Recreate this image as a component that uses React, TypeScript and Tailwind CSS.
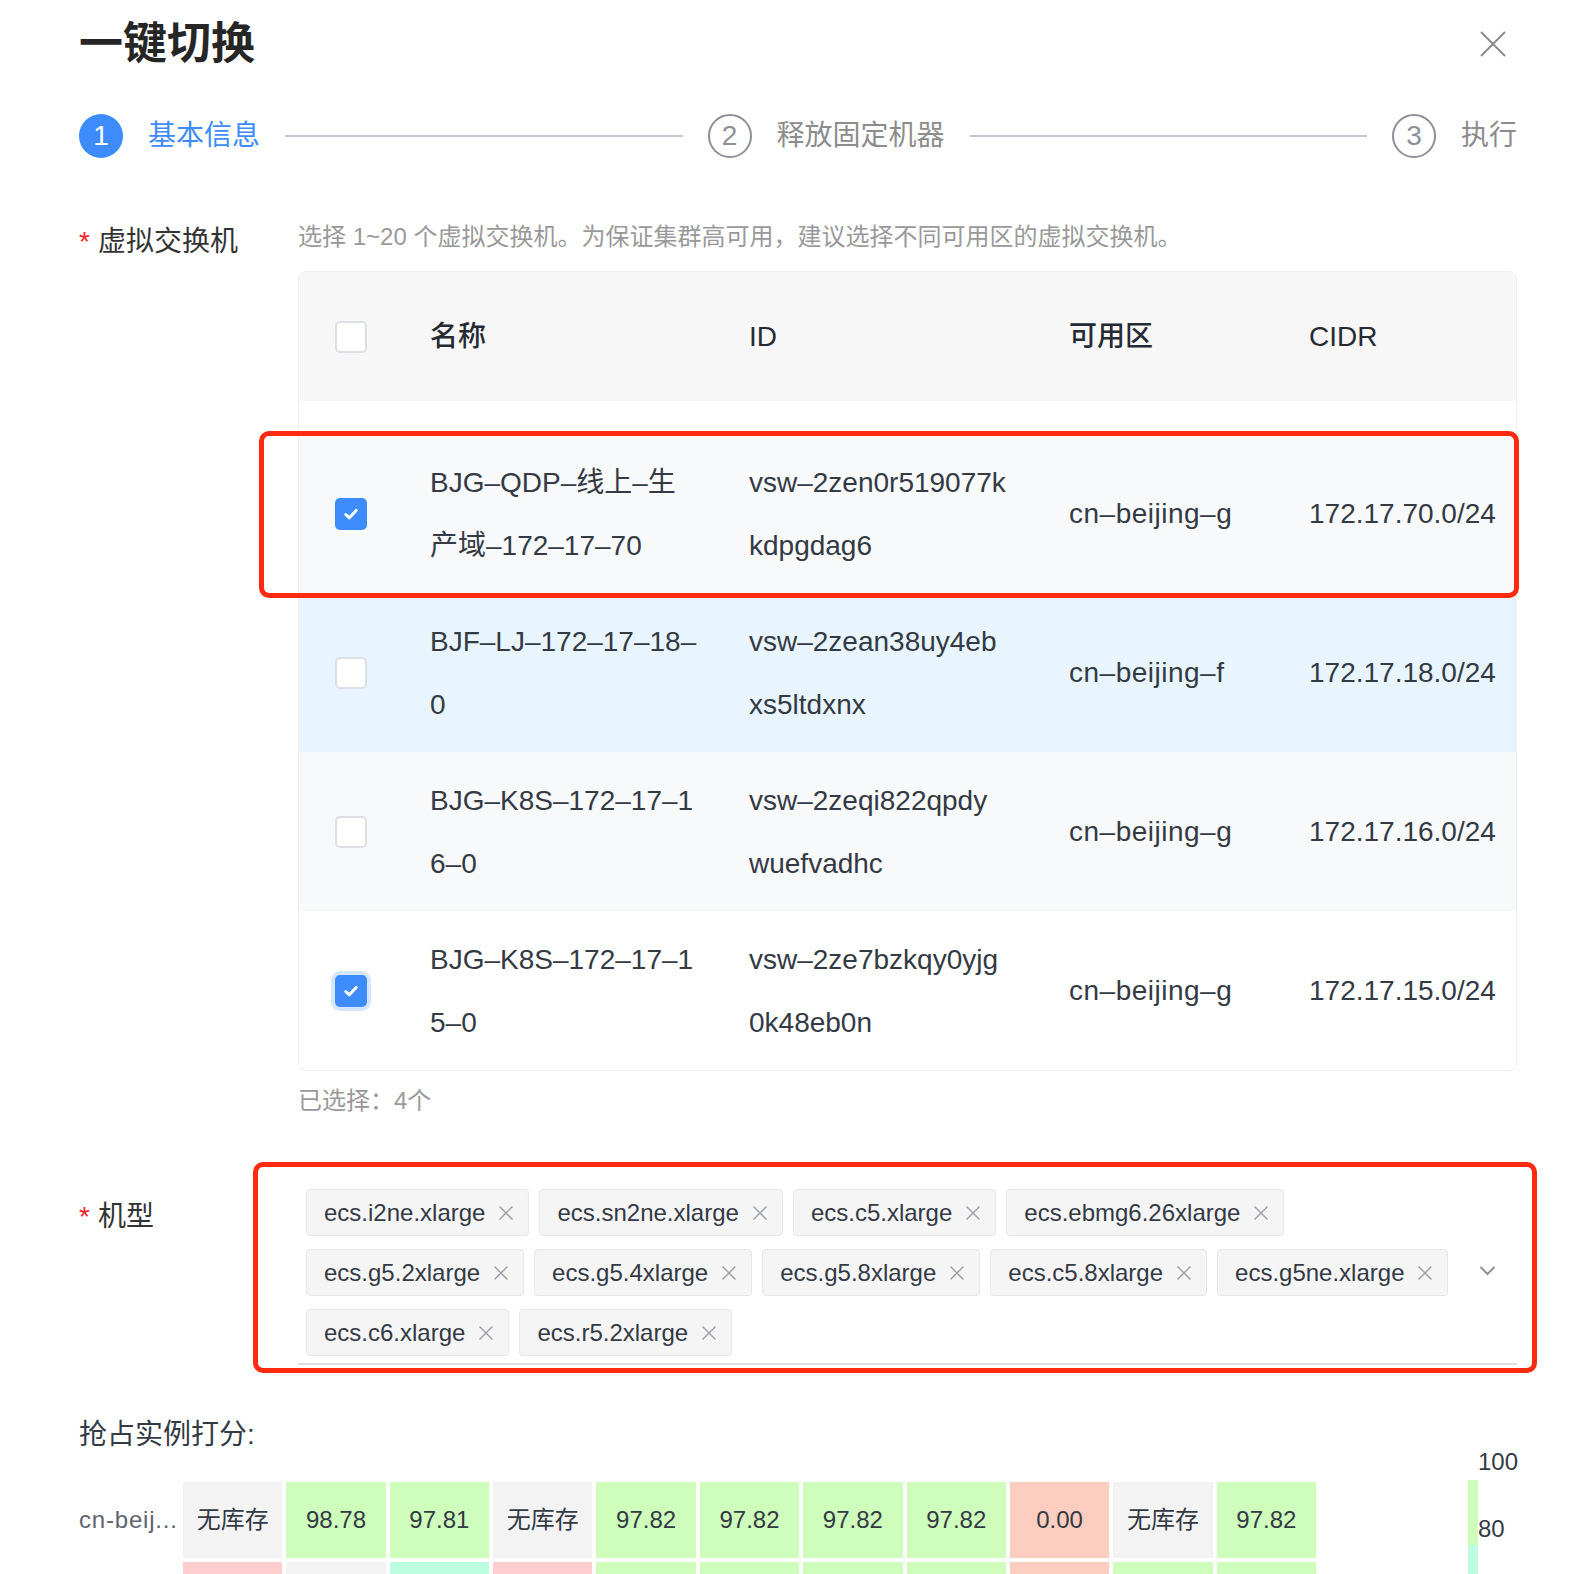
import React from "react";

type Row = {
  checked: boolean;
  focus?: boolean;
  name: [string, string];
  id: [string, string];
  zone: string;
  cidr: string;
  bg: string;
};

const rows: Row[] = [
  { checked: true, name: ["BJG–QDP–线上–生", "产域–172–17–70"], id: ["vsw–2zen0r519077k", "kdpgdag6"], zone: "cn–beijing–g", cidr: "172.17.70.0/24", bg: "bg-[#f8f9fb]" },
  { checked: false, name: ["BJF–LJ–172–17–18–", "0"], id: ["vsw–2zean38uy4eb", "xs5ltdxnx"], zone: "cn–beijing–f", cidr: "172.17.18.0/24", bg: "bg-[#e9f5fe]" },
  { checked: false, name: ["BJG–K8S–172–17–1", "6–0"], id: ["vsw–2zeqi822qpdy", "wuefvadhc"], zone: "cn–beijing–g", cidr: "172.17.16.0/24", bg: "bg-[#f8f9fb]" },
  { checked: true, focus: true, name: ["BJG–K8S–172–17–1", "5–0"], id: ["vsw–2ze7bzkqy0yjg", "0k48eb0n"], zone: "cn–beijing–g", cidr: "172.17.15.0/24", bg: "bg-white" },
];

const tagRows: string[][] = [
  ["ecs.i2ne.xlarge", "ecs.sn2ne.xlarge", "ecs.c5.xlarge", "ecs.ebmg6.26xlarge"],
  ["ecs.g5.2xlarge", "ecs.g5.4xlarge", "ecs.g5.8xlarge", "ecs.c5.8xlarge", "ecs.g5ne.xlarge"],
  ["ecs.c6.xlarge", "ecs.r5.2xlarge"],
];

const cellColor: Record<string, string> = {
  gray: "bg-[#f3f3f3]",
  green: "bg-[#cffdbb]",
  salmon: "bg-[#fdcdbf]",
  pink: "bg-[#fecdcd]",
  mint: "bg-[#bdfde0]",
};

const heatRow1: [string, string][] = [
  ["无库存", "gray"], ["98.78", "green"], ["97.81", "green"], ["无库存", "gray"],
  ["97.82", "green"], ["97.82", "green"], ["97.82", "green"], ["97.82", "green"],
  ["0.00", "salmon"], ["无库存", "gray"], ["97.82", "green"],
];
const heatRow2: string[] = ["pink", "gray", "mint", "pink", "green", "green", "green", "green", "salmon", "green", "green"];

function Checkbox({ checked, focus }: { checked?: boolean; focus?: boolean }) {
  if (checked) {
    return (
      <div
        className={
          focus
            ? "flex h-[32px] w-[32px] items-center justify-center rounded-[5px] bg-[#3d8bfd] ring-[4px] ring-[#d6e6ff]"
            : "flex h-[32px] w-[32px] items-center justify-center rounded-[5px] bg-[#3d8bfd]"
        }
      >
        <svg width="18" height="18" viewBox="0 0 18 18">
          <path d="M3.8 9.6 L7.4 12.8 L14.2 5.4" fill="none" stroke="white" strokeWidth="3" strokeLinecap="round" strokeLinejoin="round" />
        </svg>
      </div>
    );
  }
  return <div className="h-[32px] w-[32px] rounded-[5px] border-2 border-[#dcdfe6] bg-white" />;
}

function Tag({ label }: { label: string }) {
  return (
    <div className="flex h-[47px] items-center rounded-[4px] border-[1.5px] border-[#e6e7e9] bg-[#f5f5f6] pl-[17px] pr-[14px] text-[24px] text-[#333a44]">
      <span className="whitespace-nowrap">{label}</span>
      <svg className="ml-[13px]" width="16" height="16" viewBox="0 0 16 16">
        <path d="M1.5 1.5 L14.5 14.5 M14.5 1.5 L1.5 14.5" stroke="#9a9ea6" strokeWidth="1.4" fill="none" />
      </svg>
    </div>
  );
}

export default function App() {
  return (
    <div className="h-[1574px] w-[1596px] overflow-hidden bg-white px-[79px] font-['Liberation_Sans','Noto_Sans_CJK_SC',sans-serif] text-[#333a44]">
      {/* Header */}
      <div className="flex h-[88px] items-center justify-between">
        <h1 className="text-[44px] font-semibold leading-none text-[#262626]">一键切换</h1>
        <svg className="mr-[11px]" width="26" height="26" viewBox="0 0 26 26">
          <path d="M1 1 L25 25 M25 1 L1 25" stroke="#8c8c8c" strokeWidth="2" fill="none" />
        </svg>
      </div>

      {/* Steps */}
      <div className="flex h-[92px] items-center gap-[25px] pt-[4px]">
        <div className="flex h-[44px] w-[44px] items-center justify-center rounded-full bg-[#3d8bfd] text-[28px] text-white">1</div>
        <span className="whitespace-nowrap text-[28px] text-[#3d8bfd]">基本信息</span>
        <div className="h-[2px] flex-1 bg-[#c3c7cf]" />
        <div className="flex h-[44px] w-[44px] items-center justify-center rounded-full border-2 border-[#8e9099] text-[28px] text-[#8e9099]">2</div>
        <span className="whitespace-nowrap text-[28px] text-[#8c8c8c]">释放固定机器</span>
        <div className="h-[2px] flex-1 bg-[#c3c7cf]" />
        <div className="flex h-[44px] w-[44px] items-center justify-center rounded-full border-2 border-[#8e9099] text-[28px] text-[#8e9099]">3</div>
        <span className="whitespace-nowrap text-[28px] text-[#8c8c8c]">执行</span>
      </div>

      {/* vSwitch */}
      <div className="mt-[40px] flex">
        <div className="w-[219px] shrink-0 text-[28px] leading-[44px] text-[#333]">
          <span className="mr-[8px] text-[#f5222d]">*</span>虚拟交换机
        </div>
        <div className="flex-1">
          <div className="text-[24px] leading-[34px] text-[#999]">
            选择 1~20 个虚拟交换机。为保证集群高可用，建议选择不同可用区的虚拟交换机。
          </div>
          <div className="relative mt-[17px]">
            <div className="overflow-hidden rounded-[8px] border border-[#efefef]">
              <div className="grid h-[129px] grid-cols-[131px_319px_320px_240px_1fr] items-center bg-[#f7f7f8] text-[28px] font-medium text-[#262b33]">
                <div className="pl-[36px]">
                  <Checkbox />
                </div>
                <div>名称</div>
                <div>ID</div>
                <div>可用区</div>
                <div>CIDR</div>
              </div>
              <div className="h-[33px] bg-white" />
              {rows.map((r, i) => (
                <div
                  key={i}
                  className={`grid h-[159px] grid-cols-[131px_319px_320px_240px_1fr] items-center text-[28px] text-[#333a44] ${r.bg}`}
                >
                  <div className="pl-[36px]">
                    <Checkbox checked={r.checked} focus={r.focus} />
                  </div>
                  <div className="whitespace-nowrap leading-[63px]">
                    <div>{r.name[0]}</div>
                    <div>{r.name[1]}</div>
                  </div>
                  <div className="whitespace-nowrap leading-[63px]">
                    <div>{r.id[0]}</div>
                    <div>{r.id[1]}</div>
                  </div>
                  <div className="whitespace-nowrap tracking-[0.5px]">{r.zone}</div>
                  <div className="whitespace-nowrap">{r.cidr}</div>
                </div>
              ))}
            </div>
            <div className="pointer-events-none absolute left-[-39px] top-[160px] h-[167px] w-[1260px] rounded-[10px] border-[5px] border-[#ff2a0f]" />
          </div>
          <div className="mt-[13px] text-[24px] leading-[34px] text-[#999]">已选择：4个</div>
        </div>
      </div>

      {/* Instance types */}
      <div className="mt-[71px] flex">
        <div className="w-[219px] shrink-0 text-[28px] leading-[56px] text-[#333]">
          <span className="mr-[8px] text-[#f5222d]">*</span>机型
        </div>
        <div className="relative flex-1">
          <div className="flex items-center border-b-2 border-[#dcdee3] pb-[7px] pl-[8px]">
            <div className="flex flex-1 flex-col gap-[13px]">
              {tagRows.map((tr, i) => (
                <div key={i} className="flex gap-[10px]">
                  {tr.map((t) => (
                    <Tag key={t} label={t} />
                  ))}
                </div>
              ))}
            </div>
            <svg className="mb-[5px] mr-[21px]" width="17" height="11" viewBox="0 0 17 11">
              <path d="M1.5 2 L8.5 9 L15.5 2" stroke="#8a8f99" strokeWidth="2" fill="none" />
            </svg>
          </div>
          <div className="pointer-events-none absolute left-[-45px] top-[-27px] h-[211px] w-[1284px] rounded-[10px] border-[5px] border-[#ff2a0f]" />
        </div>
      </div>

      {/* Score */}
      <div className="mt-[50px] text-[28px] leading-[40px] text-[#333a44]">抢占实例打分:</div>
      <div className="mt-[27px] flex">
        <div className="flex flex-col gap-[4px]">
          <div className="flex h-[76px]">
            <div className="w-[104px] shrink-0 text-[24px] leading-[76px] tracking-[0.8px] text-[#5f6470]">cn-beij...</div>
            <div className="grid w-[1133px] grid-cols-11 gap-x-[4px]">
              {heatRow1.map(([v, c], i) => (
                <div key={i} className={`flex items-center justify-center text-[24px] text-[#333a44] ${cellColor[c]}`}>
                  {v}
                </div>
              ))}
            </div>
          </div>
          <div className="flex h-[76px]">
            <div className="w-[104px] shrink-0" />
            <div className="grid w-[1133px] grid-cols-11 gap-x-[4px]">
              {heatRow2.map((c, i) => (
                <div key={i} className={cellColor[c]} />
              ))}
            </div>
          </div>
        </div>
        <div className="relative ml-auto w-[49px] self-stretch">
          <div className="absolute left-0 top-[-2px] flex w-[10px] flex-col">
            <div className="h-[65px] bg-[#cffdbb]" />
            <div className="h-[150px] bg-[#bdfde0]" />
          </div>
          <div className="absolute left-[10px] top-[-34px] text-[24px] leading-[28px] text-[#333a44]">100</div>
          <div className="absolute left-[10px] top-[33px] text-[24px] leading-[28px] text-[#333a44]">80</div>
        </div>
      </div>
    </div>
  );
}
